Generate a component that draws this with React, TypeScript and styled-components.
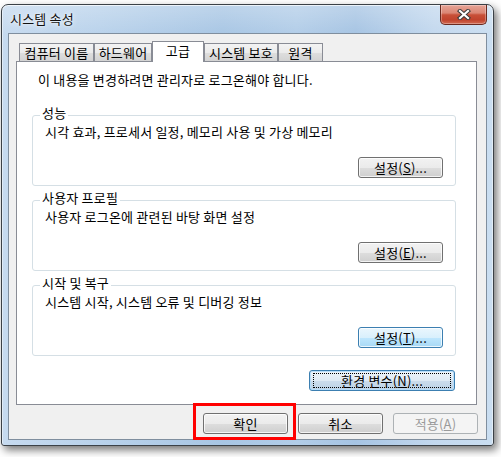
import React from "react";
import styled, { createGlobalStyle, css } from "styled-components";

const GlobalStyle = createGlobalStyle`
  html, body { margin: 0; padding: 0; background: #ffffff; }
  body {
    font-family: "Noto Sans CJK KR", "Noto Sans", sans-serif;
    font-size: 13px;
    letter-spacing: 0.2px;
    color: #000;
  }
  #root { width: 501px; height: 457px; overflow: hidden; }
`;

const Page = styled.div`
  width: 501px;
  height: 457px;
  box-sizing: border-box;
  padding: 4px 0 0 1px;
`;

const Window = styled.div`
  width: 493px;
  height: 442px;
  box-sizing: border-box;
  border: 1px solid #3b4147;
  border-radius: 7px 7px 3px 3px;
  padding: 0 6px 5px 6px;
  display: flex;
  flex-direction: column;
  background:
    linear-gradient(180deg, rgba(255,255,255,0.25) 0px, rgba(255,255,255,0) 30px),
    linear-gradient(90deg, #c6daef 0%, #b9d2eb 20%, #a8c6e4 45%, #b2cde8 60%, #a6c4e3 72%, #c3d8ee 88%, #cadef1 100%);
  box-shadow:
    inset 0 1px 0 rgba(255,255,255,0.7),
    inset 1px 0 0 rgba(255,255,255,0.45),
    inset -1px 0 0 rgba(255,255,255,0.45),
    3px 4px 9px rgba(0,0,0,0.55);
`;

const TitleBar = styled.div`
  height: 28px;
  display: flex;
  justify-content: space-between;
  align-items: flex-start;
  flex: none;
`;

const TitleText = styled.div`
  margin: 7px 0 0 2px;
  line-height: 14px;
  font-size: 13px;
  color: #111;
  text-shadow: 0 0 6px rgba(255,255,255,0.95), 0 0 2px rgba(255,255,255,0.9);
`;

const CloseButton = styled.div`
  width: 47px;
  height: 20px;
  box-sizing: border-box;
  border: 1px solid #6a2a20;
  border-top: none;
  border-radius: 0 0 5px 5px;
  background: linear-gradient(180deg, #e7a497 0%, #db8674 42%, #c85038 52%, #c0432d 78%, #d16a52 100%);
  box-shadow: inset 0 0 0 1px rgba(255,255,255,0.3);
  display: flex;
  align-items: center;
  justify-content: center;
`;

const Client = styled.div`
  flex: 1;
  box-sizing: border-box;
  border: 1px solid #7f8e9e;
  background: #f0f0f0;
  display: flex;
  flex-direction: column;
`;

const TabRow = styled.div`
  display: flex;
  align-items: flex-end;
  height: 20px;
  margin: 7px 0 0 10px;
  position: relative;
  z-index: 1;
`;

const Tab = styled.div<{ $w: number; $active?: boolean }>`
  width: ${(p) => p.$w}px;
  box-sizing: border-box;
  border: 1px solid #898c95;
  border-bottom: none;
  display: flex;
  align-items: center;
  justify-content: center;
  line-height: 14px;
  white-space: nowrap;
  ${(p) =>
    p.$active
      ? css`
          height: 21px;
          margin-bottom: -1px;
          padding-bottom: 2px;
          background: #ffffff;
        `
      : css`
          height: 18px;
          background: linear-gradient(180deg, #f3f3f3 0%, #ebebeb 50%, #dedede 52%, #d3d3d3 100%);
        `}
`;

const Panel = styled.div`
  width: 461px;
  height: 344px;
  box-sizing: border-box;
  margin-left: 7px;
  border: 1px solid #898c95;
  background: #ffffff;
  display: flex;
  flex-direction: column;
`;

const Notice = styled.div`
  margin: 11px 0 0 21px;
  line-height: 14px;
`;

const Groups = styled.div`
  display: flex;
  flex-direction: column;
  gap: 5px;
  margin: 19px 20px 0 15px;
`;

const Group = styled.fieldset`
  margin: 0;
  padding: 0;
  min-width: 0;
  border: 1px solid #d5dfe5;
  border-radius: 3px;
`;

const Legend = styled.legend`
  margin-left: 7px;
  padding: 0 2px 4px 2px;
  line-height: 14px;
`;

const GroupBody = styled.div`
  display: flex;
  flex-direction: column;
  padding: 1px 12px 7px 12px;
`;

const Desc = styled.div`
  line-height: 14px;
  white-space: nowrap;
`;

type Variant = "normal" | "hot" | "default" | "disabled";

const Button = styled.button<{ $w: number; $variant?: Variant; $focus?: boolean }>`
  position: relative;
  width: ${(p) => p.$w}px;
  height: 21px;
  box-sizing: border-box;
  padding: 0;
  margin: 0;
  font-family: inherit;
  font-size: 13px;
  letter-spacing: 0.2px;
  line-height: 14px;
  color: #000;
  border-radius: 3px;
  display: flex;
  align-items: center;
  justify-content: center;
  white-space: nowrap;
  border: 1px solid #707070;
  background: linear-gradient(180deg, #f2f2f2 0%, #ebebeb 50%, #dddddd 52%, #cfcfcf 100%);
  box-shadow: inset 0 0 0 1px rgba(255,255,255,0.75);
  ${(p) =>
    p.$variant === "hot" &&
    css`
      border-color: #3c7fb1;
      background: linear-gradient(180deg, #eaf6fd 0%, #d9f0fc 50%, #bee6fd 52%, #a7d9f5 100%);
    `}
  ${(p) =>
    p.$variant === "default" &&
    css`
      border-color: #3c7fb1;
      background: linear-gradient(180deg, #edf4fa 0%, #dfeaf4 50%, #cbdcec 52%, #bcd2e6 100%);
      box-shadow: inset 0 0 0 1px rgba(180, 220, 250, 0.9);
    `}
  ${(p) =>
    p.$variant === "disabled" &&
    css`
      border-color: #adb2b5;
      background: #f4f4f4;
      color: #9a9a9a;
      box-shadow: none;
    `}
  ${(p) =>
    p.$focus &&
    css`
      &::after {
        content: "";
        position: absolute;
        top: 2px;
        left: 3px;
        right: 3px;
        bottom: 2px;
        border: 1px dotted #000;
      }
    `}
`;

const GroupButton = styled(Button)`
  align-self: flex-end;
  margin-top: 18px;
`;

const EnvButton = styled(Button)`
  align-self: flex-end;
  margin: 14px 21px 0 0;
`;

const OkButton = styled(Button)`
  &::after {
    content: "";
    position: absolute;
    top: -11px;
    left: -11px;
    right: -9px;
    bottom: -7px;
    border: 3px solid #ff0000;
    pointer-events: none;
  }
`;

const ButtonRow = styled.div`
  display: flex;
  justify-content: flex-end;
  gap: 10px;
  margin: 8px 8px 0 0;
`;

const CloseGlyph = () => (
  <svg width="14" height="11" viewBox="0 0 14 11">
    <path d="M3 2 L11 9 M11 2 L3 9" stroke="#3a3a3a" strokeWidth="4.2" strokeLinecap="square" fill="none" />
    <path d="M3 2 L11 9 M11 2 L3 9" stroke="#ffffff" strokeWidth="2.2" strokeLinecap="square" fill="none" />
  </svg>
);

const groups = [
  { title: "성능", desc: "시각 효과, 프로세서 일정, 메모리 사용 및 가상 메모리", key: "S", hot: false },
  { title: "사용자 프로필", desc: "사용자 로그온에 관련된 바탕 화면 설정", key: "E", hot: false },
  { title: "시작 및 복구", desc: "시스템 시작, 시스템 오류 및 디버깅 정보", key: "T", hot: true },
];

const tabs = [
  { label: "컴퓨터 이름", w: 75 },
  { label: "하드웨어", w: 58 },
  { label: "고급", w: 52, active: true },
  { label: "시스템 보호", w: 74 },
  { label: "원격", w: 45 },
];

export default function App() {
  return (
    <Page>
      <GlobalStyle />
      <Window>
        <TitleBar>
          <TitleText>시스템 속성</TitleText>
          <CloseButton>
            <CloseGlyph />
          </CloseButton>
        </TitleBar>
        <Client>
          <TabRow>
            {tabs.map((t) => (
              <Tab key={t.label} $w={t.w} $active={t.active}>
                {t.label}
              </Tab>
            ))}
          </TabRow>
          <Panel>
            <Notice>이 내용을 변경하려면 관리자로 로그온해야 합니다.</Notice>
            <Groups>
              {groups.map((g) => (
                <Group key={g.title}>
                  <Legend>{g.title}</Legend>
                  <GroupBody>
                    <Desc>{g.desc}</Desc>
                    <GroupButton type="button" $w={85} $variant={g.hot ? "hot" : "normal"}>
                      설정(<u>{g.key}</u>)...
                    </GroupButton>
                  </GroupBody>
                </Group>
              ))}
            </Groups>
            <EnvButton type="button" $w={146} $variant="default" $focus>
              환경 변수(<u>N</u>)...
            </EnvButton>
          </Panel>
          <ButtonRow>
            <OkButton type="button" $w={85}>확인</OkButton>
            <Button type="button" $w={85}>취소</Button>
            <Button type="button" $w={85} $variant="disabled">
              적용(<u>A</u>)
            </Button>
          </ButtonRow>
        </Client>
      </Window>
    </Page>
  );
}
